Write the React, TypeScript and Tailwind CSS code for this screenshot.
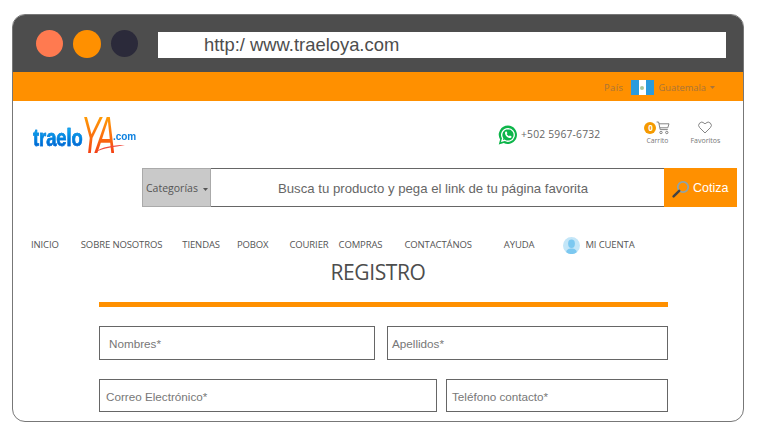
import React from "react";

const OPEN = "font-['Open_Sans',sans-serif]";
const ARIAL = "font-['Liberation_Sans',Arial,sans-serif]";

function Flag() {
  return (
    <div className="flex h-[15px] w-[23px]">
      <div className="w-[8px] bg-[#2b9bdc]" />
      <div className="flex w-[7px] items-center justify-center bg-white">
        <div className="h-[4px] w-[4px] rounded-full bg-[#a9c79a]" />
      </div>
      <div className="w-[8px] bg-[#2b9bdc]" />
    </div>
  );
}

function Caret({ color }: { color: string }) {
  return (
    <svg width="5" height="3" viewBox="0 0 5 3" className="shrink-0">
      <path d="M0 0h5L2.5 3z" fill={color} />
    </svg>
  );
}

function Whatsapp() {
  return (
    <svg width="20" height="20" viewBox="0 0 20 20">
      <path d="M10 .6a9.2 9.2 0 0 0-7.9 13.9L.8 19.4l5-1.3A9.2 9.2 0 1 0 10 .6z" fill="#0db54a" />
      <path
        d="M10 3.6a6.3 6.3 0 0 0-5.3 9.7l-.8 2.7 2.8-.7A6.3 6.3 0 1 0 10 3.6z"
        fill="none"
        stroke="#fff"
        strokeWidth="1.3"
      />
      <path
        d="M7.8 6.6c-.9.5-1 1.6-.5 2.8.7 1.6 2.2 3 3.9 3.5 1.1.3 2-.1 2.3-1 .1-.3 0-.5-.2-.6l-1.3-.7c-.2-.1-.4 0-.5.1l-.5.6c-.9-.3-1.8-1.2-2.3-2.2l.5-.5c.1-.2.2-.3.1-.5l-.6-1.4c-.1-.3-.2-.3-.4-.1z"
        fill="#fff"
      />
    </svg>
  );
}

function Cart() {
  return (
    <svg width="14" height="14" viewBox="0 0 14 14" fill="none" stroke="#777" strokeWidth="0.9">
      <path d="M.6 1h2l1.6 7.6h7.6" />
      <path d="M3 2.8h10l-1.2 4H3.9" />
      <circle cx="5" cy="11.5" r="1.2" />
      <circle cx="10.8" cy="11.5" r="1.2" />
    </svg>
  );
}

function Heart() {
  return (
    <svg width="14" height="13" viewBox="0 0 14 13" fill="none" stroke="#777" strokeWidth="0.9">
      <path d="M7 12 1.6 6.6a3.2 3.2 0 0 1 0-4.5 3.2 3.2 0 0 1 4.5 0l.9.9.9-.9a3.2 3.2 0 0 1 4.5 0 3.2 3.2 0 0 1 0 4.5z" />
    </svg>
  );
}

function Magnifier() {
  return (
    <svg width="18" height="18" viewBox="0 0 18 18" fill="none">
      <circle cx="11" cy="7" r="5.2" stroke="#8fa3a8" strokeWidth="1.8" />
      <path d="M7.2 10.8 1.6 16.4" stroke="#444" strokeWidth="2.4" strokeLinecap="round" />
    </svg>
  );
}

function Avatar() {
  return (
    <svg width="17" height="17" viewBox="0 0 17 17">
      <circle cx="8.5" cy="8.5" r="8.5" fill="#c3e6f8" />
      <ellipse cx="8.5" cy="6.8" rx="3.4" ry="4.2" fill="#7cc8f0" />
      <path d="M3.2 15.2c.5-3 3-3.6 5.3-3.6s4.8.6 5.3 3.6a8.4 8.4 0 0 1-10.6 0z" fill="#7cc8f0" />
    </svg>
  );
}

function Logo() {
  return (
    <div className="relative flex h-[40px] w-[105px] items-center pl-[1px]">
      <span className="mt-[8px] w-[49px] origin-left scale-y-[1.3] bg-gradient-to-b from-[#19b4f2] to-[#0a50c8] bg-clip-text font-['Liberation_Sans',sans-serif] text-[18.5px] leading-none font-bold tracking-[-0.1px] text-transparent [-webkit-text-stroke:0.4px_#1080e0]">
        traelo
      </span>
      <span className="mt-[3px] ml-[-1px] w-[33px] scale-y-[1.7] bg-gradient-to-b from-[#ffa800] to-[#f01414] bg-clip-text pr-[3px] font-['Liberation_Sans',sans-serif] text-[30px] leading-none tracking-[-3.5px] text-transparent italic">
        YA
      </span>
      <span className="mt-[4px] ml-[-1px] scale-y-[1.15] font-['Liberation_Sans',sans-serif] text-[10px] leading-none font-bold tracking-[-0.1px] text-[#0f82e0]">
        .com
      </span>
      <svg width="34" height="12" viewBox="0 0 34 12" className="absolute top-[26px] left-[60px]">
        <path d="M3 11C10 6 20 4 33 4 22 6 12 7 3 11z" fill="#f0483c" />
      </svg>
    </div>
  );
}

function Field({ label, className }: { label: string; className: string }) {
  return (
    <div
      className={`flex items-center border border-[#666] pt-[2px] text-[11.7px] text-[#777] ${ARIAL} ${className}`}
    >
      {label}
    </div>
  );
}

const nav: [string, string][] = [
  ["INICIO", "ml-0"],
  ["SOBRE NOSOTROS", "ml-[22px]"],
  ["TIENDAS", "ml-[20px]"],
  ["POBOX", "ml-[17px]"],
  ["COURIER", "ml-[21px]"],
  ["COMPRAS", "ml-[10px]"],
  ["CONTACTÁNOS", "ml-[22px]"],
  ["AYUDA", "ml-[32px]"],
];

export default function App() {
  return (
    <div className="h-[430px] w-[760px] overflow-hidden bg-white pt-[14px] pl-[12px]">
      <div className="h-[408px] w-[732px] overflow-hidden rounded-[13px] border border-[#777]">
        <div className="flex h-[57px] items-center bg-[#4d4d4d] pl-[23px]">
          <div className="h-[27px] w-[27px] rounded-full bg-[#ff7a50]" />
          <div className="ml-[10px] h-[28px] w-[28px] rounded-full bg-[#ff9000]" />
          <div className="ml-[10px] h-[27px] w-[27px] rounded-full bg-[#2b2a3a]" />
          <div
            className={`mt-[2px] ml-[20px] flex h-[26px] w-[568px] items-center bg-white pl-[46px] text-[18.4px] text-[#4d4d4d] ${ARIAL}`}
          >
            http:/ www.traeloya.com
          </div>
        </div>

        <div
          className={`flex h-[29px] items-center bg-[#ff9000] pl-[591px] text-[9.3px] text-[#a8743a] ${OPEN}`}
        >
          <span className="mt-[2px] tracking-[0.5px]">País</span>
          <div className="mt-[2px] ml-[7px]">
            <Flag />
          </div>
          <span className="mt-[2px] ml-[5px]">Guatemala</span>
          <div className="mt-[2px] ml-[4px]">
            <Caret color="#a8743a" />
          </div>
        </div>

        <div className="flex h-[67px] items-center pl-[19px]">
          <Logo />
          <div className="ml-[361px] flex items-center">
            <Whatsapp />
            <span className={`ml-[3px] text-[10.3px] tracking-[0.2px] text-[#666] ${OPEN}`}>
              +502 5967-6732
            </span>
          </div>
          <div className="mb-[3px] ml-[44px] flex w-[26px] flex-col items-center">
            <div className="flex items-center">
              <div
                className={`flex h-[12px] w-[12px] items-center justify-center rounded-full bg-[#f59a00] text-[8px] leading-none font-bold text-white ${OPEN}`}
              >
                0
              </div>
              <Cart />
            </div>
            <span className={`mt-[2px] text-[6.8px] leading-[8px] text-[#777] ${OPEN}`}>Carrito</span>
          </div>
          <div className="mb-[3px] ml-[19px] flex w-[32px] flex-col items-center">
            <Heart />
            <span className={`mt-[3px] text-[7px] leading-[8px] text-[#777] ${OPEN}`}>Favoritos</span>
          </div>
        </div>

        <div className="ml-[129px] flex h-[39px] w-[595px]">
          <div
            className={`flex w-[69px] items-center gap-[5px] border border-[#aaa] bg-[#c9c9c9] pt-[3px] pl-[3px] text-[10.5px] text-[#555] ${OPEN}`}
          >
            Categorías
            <Caret color="#555" />
          </div>
          <div
            className={`flex w-[453px] items-center justify-center border-y border-[#666] pt-[3px] pr-[9px] text-[13.2px] text-[#666] ${ARIAL}`}
          >
            Busca tu producto y pega el link de tu página favorita
          </div>
          <div
            className={`flex w-[73px] items-center bg-[#ff9000] pt-[2px] pl-[8px] text-[12.5px] text-white ${ARIAL}`}
          >
            <Magnifier />
            <span className="ml-[3px]">Cotiza</span>
          </div>
        </div>

        <div
          className={`mt-[29px] flex h-[17px] items-center pt-[1px] pl-[18px] text-[9.5px] tracking-[-0.12px] text-[#555] ${OPEN}`}
        >
          {nav.map(([t, m]) => (
            <span key={t} className={m}>
              {t}
            </span>
          ))}
          <div className="ml-[29px]">
            <Avatar />
          </div>
          <span className="ml-[5px]">MI CUENTA</span>
        </div>

        <div
          className={`mt-[5px] text-center text-[21px] leading-[29px] tracking-[-0.4px] text-[#4d4d4d] ${OPEN}`}
        >
          REGISTRO
        </div>

        <div className="mx-[86px] mt-[15px] h-[5px] w-[569px] bg-[#ff9000]" />

        <div className="mx-[86px] mt-[19px] flex w-[569px] gap-[12px]">
          <Field label="Nombres*" className="h-[34px] w-[276px] pl-[9px]" />
          <Field label="Apellidos*" className="h-[34px] w-[281px] pl-[4px]" />
        </div>
        <div className="mx-[86px] mt-[19px] flex w-[569px] gap-[9px]">
          <Field label="Correo Electrónico*" className="h-[33px] w-[338px] pl-[6px]" />
          <Field label="Teléfono contacto*" className="h-[33px] w-[222px] pl-[5px]" />
        </div>
      </div>
    </div>
  );
}
